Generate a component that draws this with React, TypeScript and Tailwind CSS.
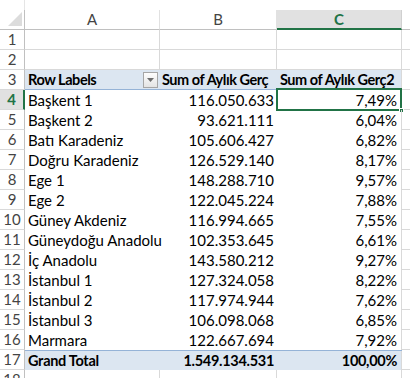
const rows: [string, string, string][] = [
  ['Başkent 1', '116.050.633', '7,49%'],
  ['Başkent 2', '93.621.111', '6,04%'],
  ['Batı Karadeniz', '105.606.427', '6,82%'],
  ['Doğru Karadeniz', '126.529.140', '8,17%'],
  ['Ege 1', '148.288.710', '9,57%'],
  ['Ege 2', '122.045.224', '7,88%'],
  ['Güney Akdeniz', '116.994.665', '7,55%'],
  ['Güneydoğu Anadolu', '102.353.645', '6,61%'],
  ['İç Anadolu', '143.580.212', '9,27%'],
  ['İstanbul 1', '127.324.058', '8,22%'],
  ['İstanbul 2', '117.974.944', '7,62%'],
  ['İstanbul 3', '106.098.068', '6,85%'],
  ['Marmara', '122.667.694', '7,92%'],
]

function RowHead({ n, active }: { n: number | string; active?: boolean }) {
  return (
    <div
      className={`w-[25px] shrink-0 h-full flex items-center justify-center border-b border-[#d9d9d9] ${
        active
          ? 'bg-[#e1e1e1] text-[#217346] font-bold border-r-2 border-r-[#217346]'
          : 'text-[#444] border-r border-r-[#c0c0c0]'
      }`}
    >
      {n}
    </div>
  )
}

function Tail() {
  return <div className="flex-1 h-full border-b border-[#d9d9d9]" />
}

export default function App() {
  return (
    <div className="w-[410px] h-[378px] bg-white overflow-hidden text-[15px] text-black" style={{ fontFamily: 'Lato, "Liberation Sans", sans-serif' }}>
      {/* strip above headers */}
      <div className="h-[10px] flex">
        <div className="w-[25px] border-r border-[#e5e5e5]" />
      </div>

      {/* column headers */}
      <div className="flex h-[20px] text-[#444]">
        <div className="w-[25px] shrink-0 border-r border-r-[#c0c0c0] border-b border-b-[#c0c0c0] relative">
          <svg className="absolute left-[8px] top-[2px]" width="14" height="14" viewBox="0 0 14 14">
            <polygon points="14,0 14,14 0,14" fill="#dcdcdc" />
          </svg>
        </div>
        <div className="w-[135px] shrink-0 flex items-center justify-center border-r border-[#e1e1e1] border-b border-b-[#c0c0c0]">A</div>
        <div className="w-[117px] shrink-0 flex items-center justify-center border-r border-[#e1e1e1] border-b border-b-[#c0c0c0]">B</div>
        <div className="w-[125px] shrink-0 flex items-center justify-center bg-[#e1e1e1] text-[#217346] font-bold border-b-2 border-b-[#217346] border-r border-r-[#d0d0d0]">C</div>
        <div className="flex-1 border-b border-b-[#c0c0c0]" />
      </div>

      {/* rows 1-2 */}
      {[1, 2].map((n) => (
        <div key={n} className="flex h-[20px]">
          <RowHead n={n} />
          <div className="w-[135px] shrink-0 border-r border-b border-[#d9d9d9]" />
          <div className="w-[117px] shrink-0 border-r border-b border-[#d9d9d9]" />
          <div className="w-[125px] shrink-0 border-r border-b border-[#d9d9d9]" />
          <Tail />
        </div>
      ))}

      {/* pivot header */}
      <div className="flex h-[20px]">
        <RowHead n={3} />
        <div className="w-[377px] shrink-0 flex bg-[#dce6f1] border-b border-[#95b3d7] font-bold leading-[19px] text-[14.5px] tracking-[-0.45px]">
          <div className="w-[135px] shrink-0 pl-[3px] flex items-center justify-between pr-[2px]">
            <span>Row Labels</span>
            <span className="w-[15px] h-[16px] border border-[#a6a6a6] bg-gradient-to-b from-[#fdfdfd] to-[#e4e4e4] flex items-center justify-center">
              <svg width="7" height="4" viewBox="0 0 7 4">
                <polygon points="0,0 7,0 3.5,4" fill="#6d6d6d" />
              </svg>
            </span>
          </div>
          <div className="w-[117px] shrink-0 pl-[2px] whitespace-nowrap overflow-hidden">Sum of Aylık Gerç</div>
          <div className="w-[125px] shrink-0 pl-[3px] whitespace-nowrap border-r border-[#d9d9d9]">Sum of Aylık Gerç2</div>
        </div>
        <Tail />
      </div>

      {/* data rows */}
      {rows.map(([label, sum, pct], i) => (
        <div key={label} className="flex h-[20px]">
          <RowHead n={i + 4} active={i === 0} />
          <div className="w-[377px] shrink-0 flex leading-[20px]">
            <div className="w-[135px] shrink-0 pl-[3px] whitespace-nowrap">{label}</div>
            <div className="w-[117px] shrink-0 pr-[3px] text-right">{sum}</div>
            <div className="w-[125px] shrink-0 pr-[4px] text-right border-r border-[#d9d9d9] relative">
              {pct}
              {i === 0 && (
                <>
                  <div className="absolute left-[-1px] top-[-2px] right-[-1px] bottom-[-1px] border-2 border-[#217346]" />
                  <div className="absolute right-[-3px] bottom-[-3px] w-[5px] h-[5px] bg-[#217346] border border-white" />
                </>
              )}
            </div>
          </div>
          <Tail />
        </div>
      ))}

      {/* grand total */}
      <div className="flex h-[20px]">
        <RowHead n={17} />
        <div className="w-[377px] shrink-0 flex bg-[#dce6f1] border-t border-[#95b3d7] font-bold leading-[19px] text-[14.5px] tracking-[-0.3px]">
          <div className="w-[135px] shrink-0 pl-[3px]">Grand Total</div>
          <div className="w-[117px] shrink-0 pr-[3px] text-right">1.549.134.531</div>
          <div className="w-[125px] shrink-0 pr-[4px] text-right border-r border-[#d9d9d9]">100,00%</div>
        </div>
        <Tail />
      </div>

      {/* row 18 */}
      <div className="flex h-[20px]">
        <RowHead n={18} />
        <div className="w-[135px] shrink-0 border-r border-b border-[#d9d9d9]" />
        <div className="w-[117px] shrink-0 border-r border-b border-[#d9d9d9]" />
        <div className="w-[125px] shrink-0 border-r border-b border-[#d9d9d9]" />
        <Tail />
      </div>
    </div>
  )
}
